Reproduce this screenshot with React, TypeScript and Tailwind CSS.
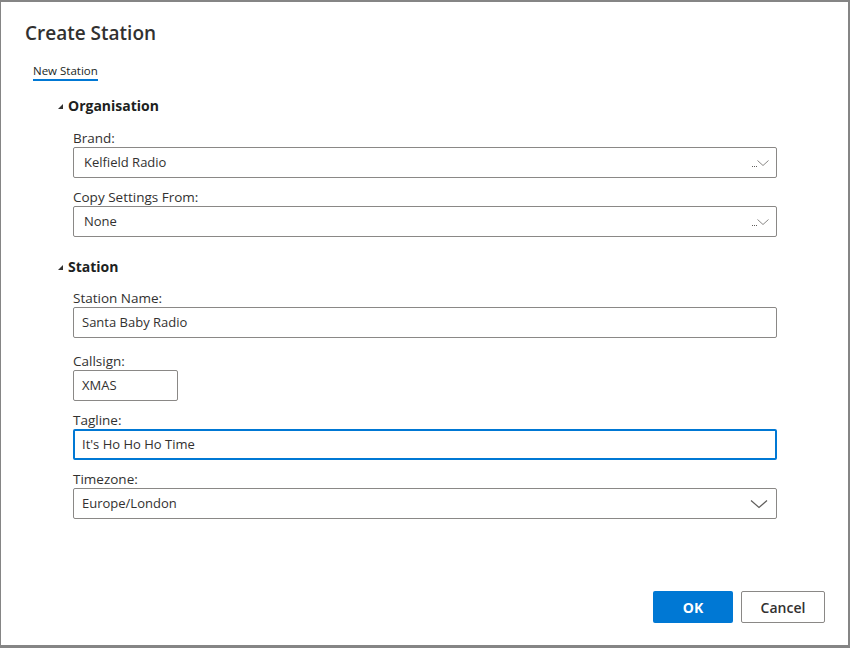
import { ReactNode } from 'react';

function Triangle() {
  return (
    <svg width="5" height="5" viewBox="0 0 5 5" className="mr-[5px] mt-[3px]">
      <path d="M5 0 L5 5 L0 5 Z" fill="#323130" />
    </svg>
  );
}

function SectionHeading({ title, className }: { title: string; className?: string }) {
  return (
    <div className={`flex items-center h-5 pl-[57px] ${className ?? ''}`}>
      <Triangle />
      <span className="text-[14px] font-bold text-[#201f1e]">{title}</span>
    </div>
  );
}

function Field({ label, className, children }: { label: string; className?: string; children: ReactNode }) {
  return (
    <div className={`flex flex-col pl-[72px] ${className ?? ''}`}>
      <label className="h-5 leading-[22px] text-[13.5px] text-[#323130]">{label}</label>
      {children}
    </div>
  );
}

function ComboBox({ value }: { value: string }) {
  return (
    <div className="flex items-center h-[31px] w-[704px] border border-[#8a8886] rounded-[2px] pl-[10px] pr-[6px]">
      <span className="flex-1 text-[13px] text-[#323130]">{value}</span>
      <svg width="18" height="12" viewBox="0 0 18 12">
        <rect x="0" y="9" width="1" height="1" fill="#605e5c" />
        <rect x="2" y="9" width="1" height="1" fill="#605e5c" />
        <rect x="4" y="9" width="1" height="1" fill="#605e5c" />
        <path d="M5.5 3.5 L11 8.5 L16.5 3.5" fill="none" stroke="#8a8886" strokeWidth="1" />
      </svg>
    </div>
  );
}

function TextBox({ value, width = 'w-[704px]', focused }: { value: string; width?: string; focused?: boolean }) {
  return (
    <div
      className={`flex items-center h-[31px] ${width} rounded-[2px] ${
        focused ? 'border-2 border-[#0078d4] pl-[7px]' : 'border border-[#8a8886] pl-[8px]'
      }`}
    >
      <span className="text-[13px] text-[#323130]">{value}</span>
    </div>
  );
}

function Select({ value }: { value: string }) {
  return (
    <div className="flex items-center h-[31px] w-[704px] border border-[#8a8886] rounded-[2px] pl-[8px] pr-[8px]">
      <span className="flex-1 text-[13px] text-[#323130]">{value}</span>
      <svg width="18" height="10" viewBox="0 0 18 10">
        <path d="M1 1.5 L9 8.5 L17 1.5" fill="none" stroke="#605e5c" strokeWidth="1.2" />
      </svg>
    </div>
  );
}

export default function App() {
  return (
    <div className="w-[850px] h-[648px] bg-[#858585] pt-[2px] pl-[1px]" style={{ fontFamily: '"Open Sans", sans-serif' }}>
      <div className="w-[847px] h-[643px] bg-white flex flex-col">
        <h1 className="mt-[17px] pl-[24px] h-7 leading-[28px] text-[19px] font-semibold text-[#323130]">Create Station</h1>

        <div className="mt-[16px] pl-[32px] flex">
          <div className="flex flex-col">
            <span className="h-4 leading-[16px] text-[11.5px] text-[#201f1e]">New Station</span>
            <div className="h-[2px] bg-[#0078d4]" />
          </div>
        </div>

        <SectionHeading title="Organisation" className="mt-[14px]" />
        <Field label="Brand:" className="mt-[12px]">
          <ComboBox value="Kelfield Radio" />
        </Field>
        <Field label="Copy Settings From:" className="mt-[8px]">
          <ComboBox value="None" />
        </Field>

        <SectionHeading title="Station" className="mt-[19px]" />
        <Field label="Station Name:" className="mt-[11px]">
          <TextBox value="Santa Baby Radio" />
        </Field>
        <Field label="Callsign:" className="mt-[12px]">
          <TextBox value="XMAS" width="w-[105px]" />
        </Field>
        <Field label="Tagline:" className="mt-[8px]">
          <TextBox value="It's Ho Ho Ho Time" focused />
        </Field>
        <Field label="Timezone:" className="mt-[8px]">
          <Select value="Europe/London" />
        </Field>

        <div className="mt-auto mb-[22px] pr-[23px] flex justify-end gap-2">
          <button className="w-[80px] h-[32px] rounded-[2px] bg-[#0078d4] text-white text-[14px] font-bold">OK</button>
          <button className="w-[84px] h-[32px] rounded-[2px] border border-[#8a8886] bg-white text-[#323130] text-[14px] font-semibold">
            Cancel
          </button>
        </div>
      </div>
    </div>
  );
}
